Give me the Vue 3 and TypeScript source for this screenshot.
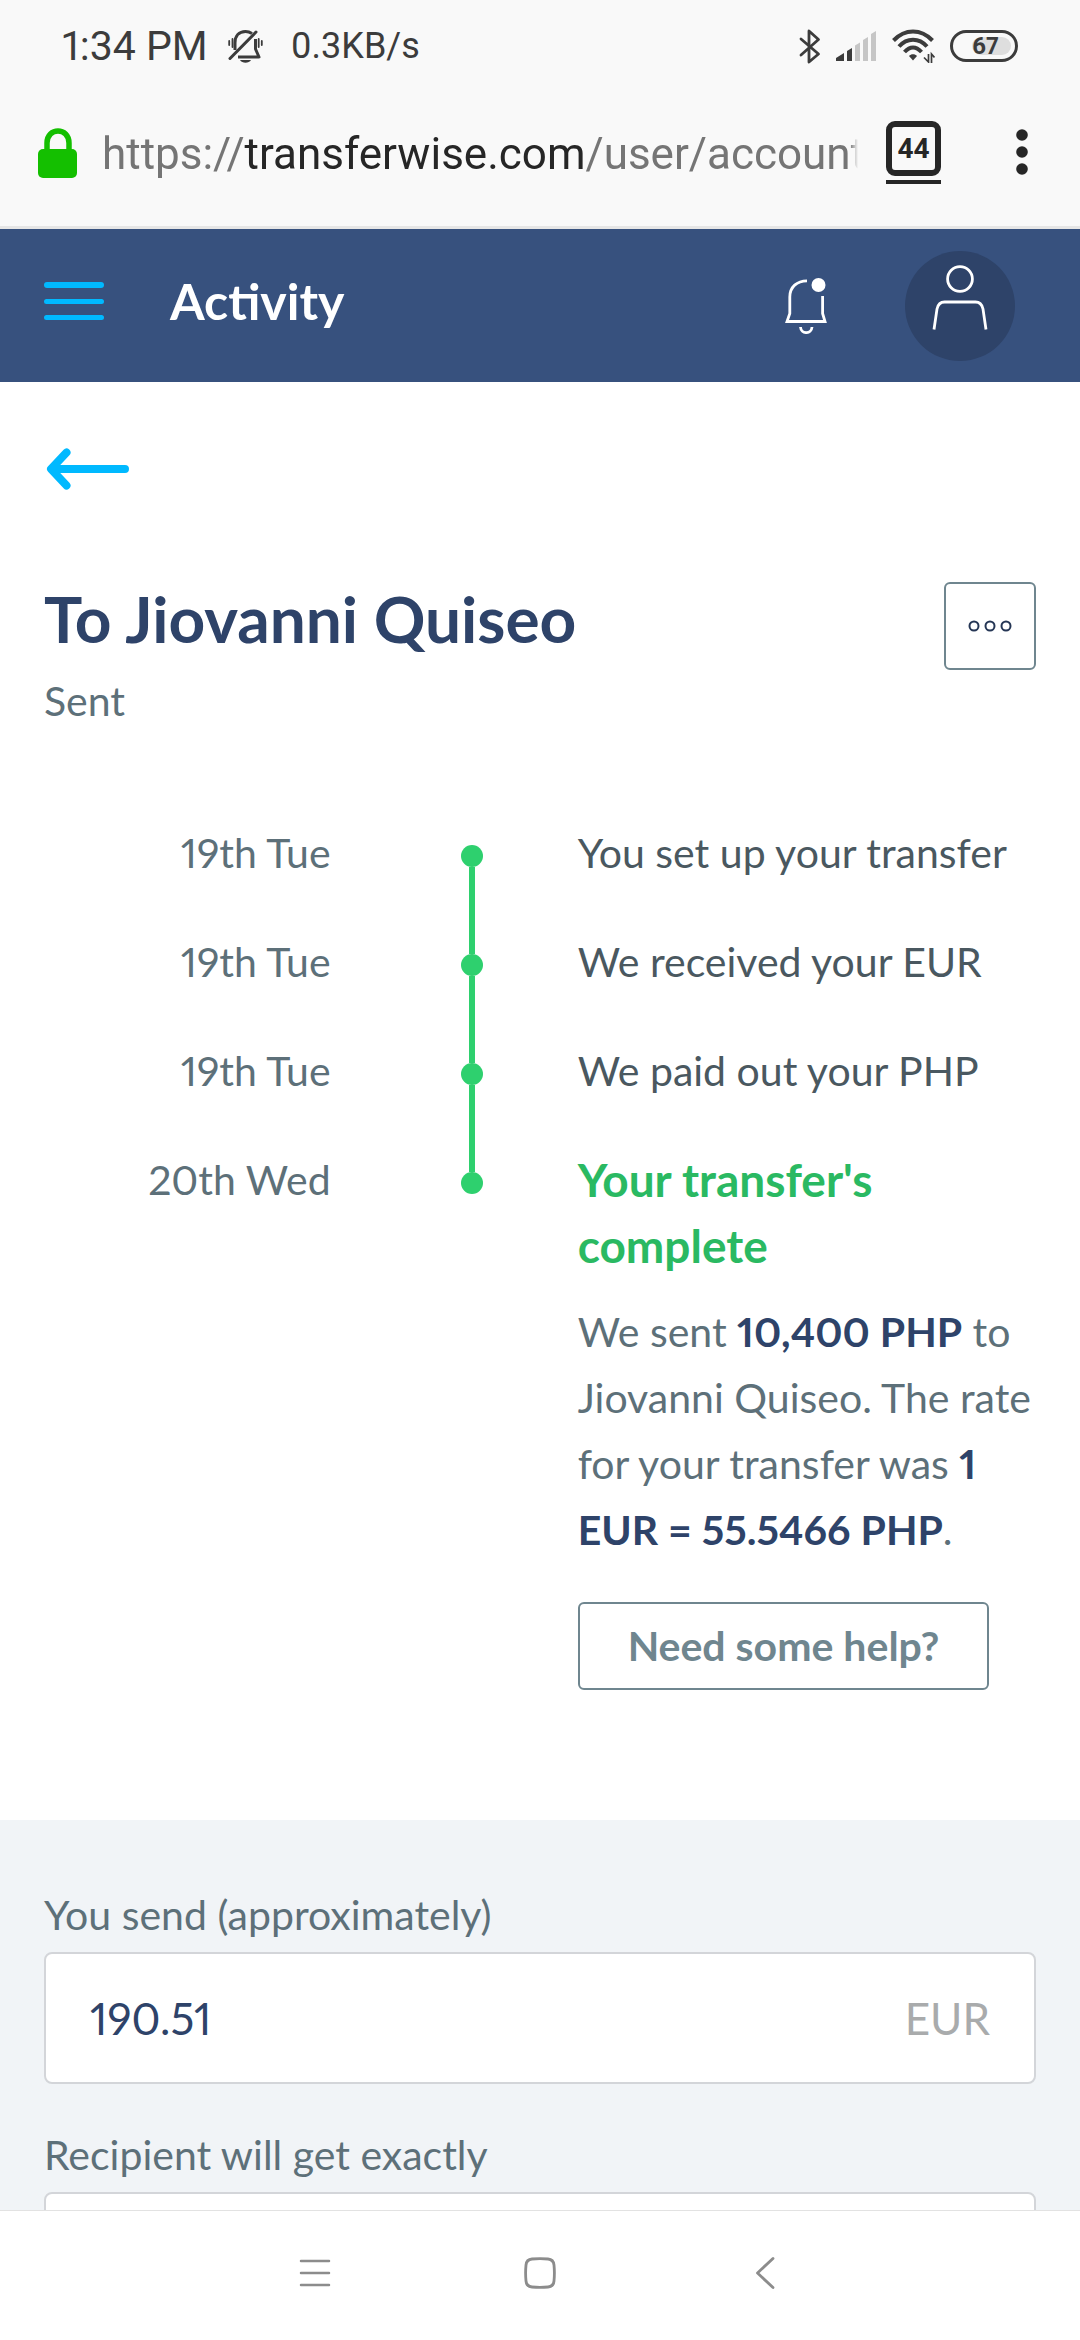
<script setup lang="ts">
import { ref } from 'vue'

interface Step {
  date: string
  text: string
}

const steps: Step[] = [
  { date: '19th Tue', text: 'You set up your transfer' },
  { date: '19th Tue', text: 'We received your EUR' },
  { date: '19th Tue', text: 'We paid out your PHP' },
]

const sendAmount = ref('190.51')
const receiveAmount = ref('')
</script>

<template>
  <div class="screen">
    <div class="status-bar">
      <span class="clock">1:34 PM</span>
      <svg class="mute" width="35" height="33" viewBox="0 0 35 33" fill="none" stroke="#3c3c3c">
        <path d="M7 20V13C7 6 11 1.500 17.500 1.500C20 1.500 22 2.200 24 3.500" stroke-width="3" />
        <path d="M27.500 9V19L31 27H10" stroke-width="3" stroke-linejoin="round" />
        <path d="M2 28.500L28 2" stroke-width="3" stroke-linecap="round" />
        <path d="M4.500 9V17M1.200 11V15M30.700 9V17M33.800 11V15" stroke-width="1.800" stroke-linecap="round" />
        <path d="M12 30H23C21 33.500 14 33.500 12 30Z" fill="#3c3c3c" stroke="none" />
      </svg>
      <span class="speed">0.3KB/s</span>
      <div class="status-icons">
        <svg width="22" height="35" viewBox="0 0 22 35" fill="none" stroke="#3c3c3c" stroke-width="2.800" stroke-linejoin="round" stroke-linecap="round">
          <path d="M2 10L19.500 25L10 33V2L19.500 10.500L2 26" />
        </svg>
        <svg class="signal" width="41" height="30" viewBox="0 0 41 30">
          <path d="M0 30V27L8 22V30ZM11 30V20L16 17V30Z" fill="#3c3c3c" />
          <path d="M19 30V14.500L24 11.500V30ZM27 30V9L32 6V30ZM35 30V3L40 0V30Z" fill="#c6c6c6" />
        </svg>
        <svg class="wifi" width="43" height="34" viewBox="0 0 43 34" fill="none" stroke="#3c3c3c" stroke-width="4">
          <path d="M1.500 11.500C13 -.500 29 -.500 40.500 11.500" />
          <path d="M7 17.500C15 8.500 27 8.500 35 17.500" />
          <path d="M12.500 23C18 17 24 17 29.500 23" />
          <path d="M17 27C19 24.800 23 24.800 25 27L21 31.500Z" fill="#3c3c3c" stroke="none" />
          <path d="M36.500 25V33L32 28.500M39.500 34V25L42.500 28.500" stroke-width="1.700" />
        </svg>
        <div class="battery"><span class="battery-level">67</span></div>
      </div>
    </div>

    <div class="url-bar">
      <svg class="lock" width="40" height="51" viewBox="0 0 40 51">
        <path d="M9 26V16C9 0 31 0 31 16V26" fill="none" stroke="#14bf00" stroke-width="5.500" />
        <rect y="22" width="39" height="29" rx="5" fill="#14bf00" />
      </svg>
      <div class="url">https://<span class="host">transferwise.com</span>/user/account</div>
      <button class="tabs" type="button" aria-label="Open tabs"><span class="tab-count">44</span></button>
      <button class="more" type="button" aria-label="Browser menu">
        <svg width="12" height="46" viewBox="0 0 12 46" fill="#262626">
          <circle cx="6" cy="6" r="5.800" />
          <circle cx="6" cy="23" r="5.800" />
          <circle cx="6" cy="40" r="5.800" />
        </svg>
      </button>
    </div>

    <header class="app-header">
      <div class="header-title">
        <button type="button" aria-label="Menu">
          <svg width="60" height="38" viewBox="0 0 60 38" fill="#00b9ff">
            <rect width="60" height="6" rx="3" />
            <rect y="17" width="60" height="5" rx="2.500" />
            <rect y="33" width="60" height="5" rx="2.500" />
          </svg>
        </button>
        <h1>Activity</h1>
      </div>
      <button class="bell" type="button" aria-label="Notifications">
        <svg width="42" height="56" viewBox="0 0 42 56" fill="none" stroke="#fff" stroke-width="2.800">
          <path d="M22 2.800C12 2.800 4.800 9 4.800 19V35.500L2 43.500H40L37.600 35.500V18" />
          <path d="M15.500 49C16 56.500 26.500 56.500 27 49" />
          <circle cx="33.500" cy="7" r="7" fill="#fff" stroke="none" />
        </svg>
      </button>
      <button class="avatar" type="button" aria-label="Profile">
        <svg width="56" height="65" viewBox="0 0 56 65" fill="none" stroke="#fff" stroke-width="2.800">
          <circle cx="28" cy="14" r="12.400" />
          <path d="M2 64.500L5 44C6 39.500 8.500 37 12.500 37H43.500C47.500 37 50 39.500 51 44L54 64.500" />
        </svg>
      </button>
    </header>

    <main class="content">
      <section class="transfer">
        <a class="back" href="#activity" aria-label="Back">
          <svg width="86" height="42" viewBox="0 0 86 42" fill="none" stroke="#00b9ff" stroke-width="8" stroke-linecap="round" stroke-linejoin="round">
            <path d="M81 21H8M22.500 4.500L7 21L22.500 37.500" />
          </svg>
        </a>

        <div class="heading">
          <div>
            <h2>To Jiovanni Quiseo</h2>
            <p class="status">Sent</p>
          </div>
          <button class="options" type="button" aria-label="More options">
            <svg width="44" height="12" viewBox="0 0 44 12" fill="none" stroke="#253655" stroke-width="2">
              <circle cx="6" cy="6" r="4.500" />
              <circle cx="22" cy="6" r="4.500" />
              <circle cx="38" cy="6" r="4.500" />
            </svg>
          </button>
        </div>

        <ol class="timeline">
          <li v-for="step in steps" :key="step.text" class="step">
            <span class="date">{{ step.date }}</span>
            <span class="marker"><i class="dot"></i></span>
            <span class="event">{{ step.text }}</span>
          </li>
          <li class="step">
            <span class="date">20th Wed</span>
            <span class="marker"><i class="dot"></i></span>
            <div class="event">
              <h3>Your transfer's complete</h3>
              <p class="summary">
                We sent <strong>10,400 PHP</strong> to Jiovanni Quiseo. The rate for your transfer was
                <strong>1 EUR = 55.5466 PHP</strong>.
              </p>
              <button class="help" type="button">Need some help?</button>
            </div>
          </li>
        </ol>
      </section>

      <section class="amounts">
        <div class="field">
          <label for="send">You send (approximately)</label>
          <div class="input-group">
            <input id="send" v-model="sendAmount" type="text" inputmode="decimal" />
            <span class="currency">EUR</span>
          </div>
        </div>
        <div class="field">
          <label for="receive">Recipient will get exactly</label>
          <div class="input-group">
            <input id="receive" v-model="receiveAmount" type="text" inputmode="decimal" />
          </div>
        </div>
      </section>
    </main>

    <nav class="system-nav" aria-label="System">
      <button type="button" aria-label="Recent apps">
        <svg width="32" height="32" viewBox="0 0 32 32" stroke="#8c8c8c" stroke-width="2.500" stroke-linecap="round">
          <path d="M2 4H30M2 16H30M2 28H30" />
        </svg>
      </button>
      <button type="button" aria-label="Home">
        <svg width="32" height="32" viewBox="0 0 32 32" fill="none" stroke="#8c8c8c" stroke-width="2.800">
          <path d="M8 2Q16 1.200 24 2Q29.500 2.500 30 8Q30.800 16 30 24Q29.500 29.500 24 30Q16 30.800 8 30Q2.500 29.500 2 24Q1.200 16 2 8Q2.500 2.500 8 2Z" />
        </svg>
      </button>
      <button type="button" aria-label="Back">
        <svg width="32" height="32" viewBox="0 0 32 32" fill="none" stroke="#8c8c8c" stroke-width="2.800" stroke-linecap="round" stroke-linejoin="round">
          <path d="M24 1.500L8.500 16L24 30.500" />
        </svg>
      </button>
    </nav>
  </div>
</template>

<style>
body {
  margin: 0;
}
</style>

<style scoped>
* {
  box-sizing: border-box;
}

.screen {
  display: flex;
  flex-direction: column;
  height: 100vh;
  background: #fff;
  font-family: Lato, "Liberation Sans", sans-serif;
  font-size: 41px;
  font-variant-numeric: proportional-nums;
  line-height: 66px;
  color: #5d7079;
}

h1,
h2,
h3,
p,
ol {
  margin: 0;
  padding: 0;
}

svg {
  display: block;
}

button {
  margin: 0;
  padding: 0;
  border: 0;
  background: none;
  font: inherit;
  color: inherit;
}

.status-bar {
  display: flex;
  flex: none;
  align-items: center;
  height: 92px;
  padding: 0 62px;
  background: #f9f9f9;
  font-family: Roboto, sans-serif;
  color: #3c3c3c;
}

.clock {
  font-size: 41px;
}

.mute {
  margin-left: 20px;
}

.speed {
  margin-left: 28px;
  font-size: 36px;
}

.status-icons {
  display: flex;
  align-items: center;
  gap: 15px;
  margin-left: auto;
}

.battery {
  width: 68px;
  height: 32px;
  padding: 4px;
  border: 3px solid #3c3c3c;
  border-radius: 16px;
}

.battery-level {
  display: block;
  width: 39px;
  height: 18px;
  margin-left: auto;
  border-radius: 9px;
  background: #dedede;
  font-size: 24px;
  font-weight: 700;
  line-height: 18px;
}

.url-bar {
  display: flex;
  flex: none;
  align-items: center;
  height: 137px;
  padding: 0 52px 14px 38px;
  border-bottom: 3px solid #e6e6e6;
  background: #f9f9f9;
  font-family: Roboto, sans-serif;
}

.url {
  flex: 1;
  min-width: 0;
  margin-left: 24px;
  padding-top: 4px;
  overflow: hidden;
  font-size: 44px;
  white-space: nowrap;
  color: #757575;
  mask-image: linear-gradient(to left, transparent, #000 8px);
}

.host {
  color: #262626;
}

.tabs {
  flex: none;
  width: 55px;
  margin-left: 28px;
  border-bottom: 4px solid #262626;
  padding-bottom: 4px;
  color: #262626;
}

.tab-count {
  display: block;
  height: 55px;
  border: 6px solid #262626;
  border-radius: 9px;
  font-size: 28px;
  font-weight: 700;
  line-height: 43px;
}

.more {
  margin-left: 75px;
}

.app-header {
  display: flex;
  flex: none;
  align-items: center;
  height: 153px;
  padding: 0 65px 0 44px;
  background: #37517e;
  color: #fff;
}

.header-title {
  display: flex;
  flex: 1;
  align-items: center;
  gap: 66px;
  padding-bottom: 10px;
}

h1 {
  font-size: 50px;
  font-weight: 700;
}

.avatar {
  display: flex;
  justify-content: center;
  width: 110px;
  height: 110px;
  margin-left: 78px;
  padding-top: 14px;
  border-radius: 50%;
  background: #2e4369;
}

.content {
  flex: 1;
  min-height: 0;
  overflow-y: auto;
  scrollbar-width: none;
}

.transfer {
  padding: 66px 44px 130px;
}

.back {
  display: block;
  width: fit-content;
}

.heading {
  display: flex;
  align-items: flex-start;
  justify-content: space-between;
  margin-top: 84px;
}

h2 {
  margin-bottom: 4px;
  font-size: 64px;
  font-weight: 700;
  line-height: 90px;
  color: #2e4369;
}

.options {
  display: flex;
  flex: none;
  align-items: center;
  justify-content: center;
  width: 92px;
  height: 88px;
  margin-top: 8px;
  border: 2px solid #6f868f;
  border-radius: 6px;
}

.timeline {
  margin-top: 86px;
  list-style: none;
}

.step {
  display: grid;
  grid-template-columns: 42% 22px 1fr;
  min-height: 109px;
}

.date {
  padding-right: 130px;
  text-align: right;
}

.marker {
  display: flex;
  flex-direction: column;
  align-items: center;
}

.marker::before {
  width: 6px;
  height: 25px;
  background: #2ed06e;
  content: "";
}

.marker::after {
  flex: 1;
  width: 6px;
  background: #2ed06e;
  content: "";
}

.step:first-child .marker::before,
.step:last-child .marker::after {
  background: none;
}

.dot {
  width: 22px;
  height: 22px;
  border-radius: 50%;
  background: #2ed06e;
}

.event {
  padding-left: 95px;
  color: #4a5860;
}

h3 {
  font-size: 46px;
  font-weight: 700;
  color: #2ab962;
}

.summary {
  margin-top: 20px;
  color: #5d7079;
}

strong {
  font-weight: 700;
  color: #2e4369;
}

.help {
  height: 88px;
  margin-top: 39px;
  padding: 0 48px;
  border: 2px solid #6f868f;
  border-radius: 6px;
  font-weight: 700;
  color: #6f868f;
}

.amounts {
  display: flex;
  flex-direction: column;
  gap: 38px;
  padding: 62px 44px;
  background: #f1f4f7;
}

label {
  display: block;
  margin-bottom: 4px;
}

.input-group {
  display: flex;
  align-items: center;
  height: 132px;
  padding: 0 44px;
  border: 2px solid #d3d5d9;
  border-radius: 8px;
  background: #fff;
  font-size: 44px;
}

input {
  flex: 1;
  min-width: 0;
  padding: 0;
  border: 0;
  outline: 0;
  background: none;
  font: inherit;
  color: #2e4369;
}

.currency {
  color: #a9abac;
}

.system-nav {
  display: flex;
  flex: none;
  align-items: center;
  justify-content: center;
  gap: 165px;
  height: 130px;
  padding-bottom: 6px;
  border-top: 1px solid #e2e2e2;
  background: #fff;
}

.system-nav button {
  display: flex;
  justify-content: center;
  width: 60px;
}
</style>
